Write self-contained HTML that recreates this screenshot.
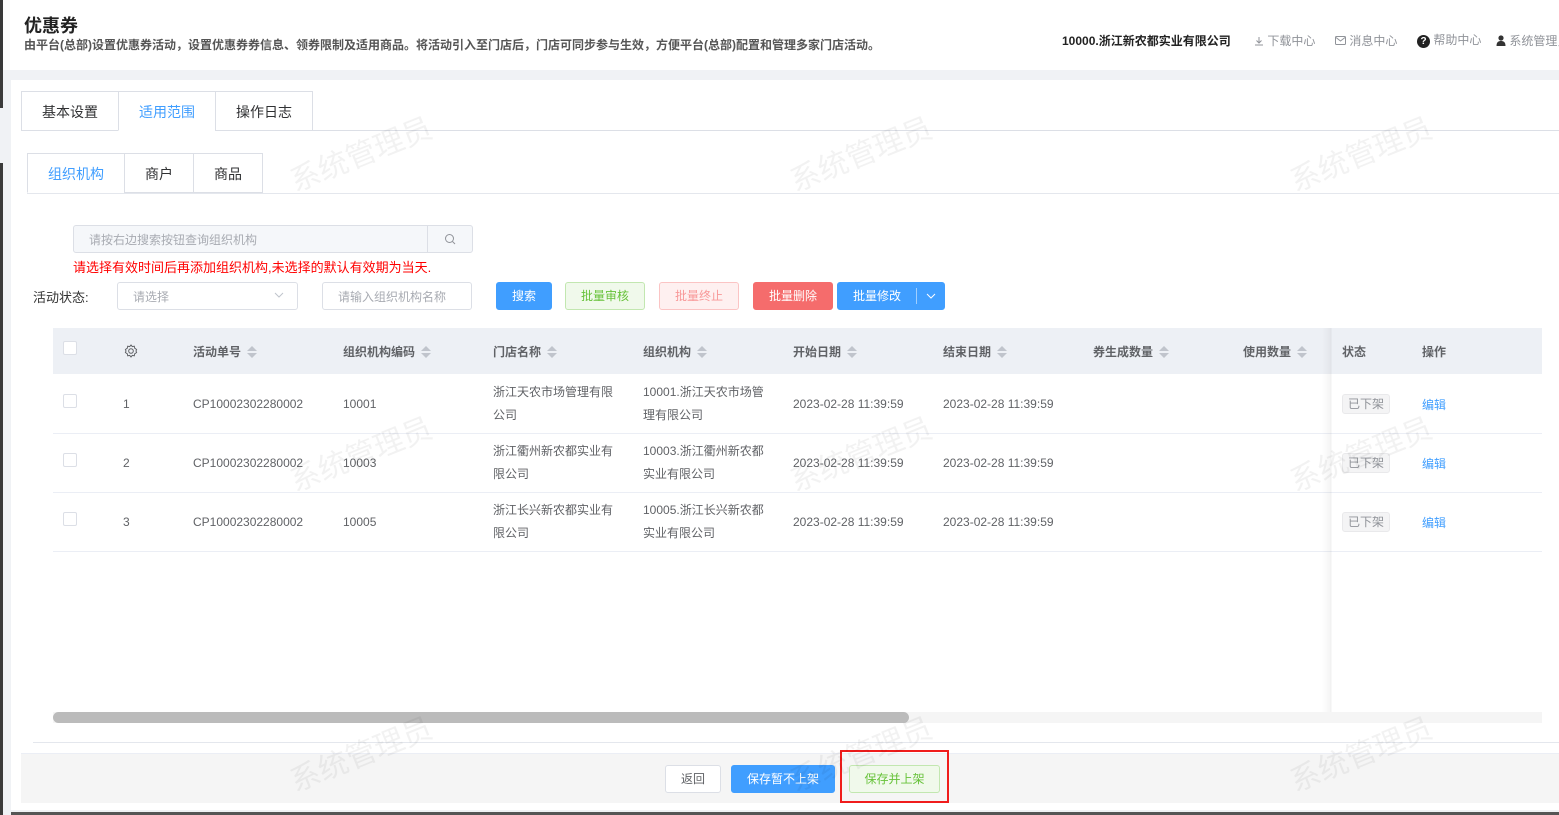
<!DOCTYPE html>
<html><head><meta charset="utf-8"><style>
*{margin:0;padding:0;box-sizing:border-box}
body{width:1559px;height:815px;overflow:hidden;background:#f0f2f5;font-family:"Liberation Sans","Noto Sans CJK SC",sans-serif;color:#333;position:relative;font-size:12px}
.a{position:absolute;white-space:nowrap}
.hdr{left:0;top:0;width:1559px;height:70px;background:#fff}
.card{left:11px;top:80px;width:1548px;height:730px;background:#fff}
.tab{position:absolute;height:40px;border:1px solid #dcdfe6;background:#fff;font-size:14px;text-align:center;line-height:40px;color:#303133}
.btn{position:absolute;height:28px;line-height:26px;text-align:center;border-radius:3px;font-size:12px;border:1px solid}
.th{position:absolute;top:343px;font-weight:bold;color:#606266;font-size:12px}
.sort{display:inline-block;width:10px;height:14px;vertical-align:middle;margin-left:6px;position:relative}
.sort:before{content:"";position:absolute;left:0;top:0;border:5px solid transparent;border-bottom-color:#c0c4cc;border-top:0}
.sort:after{content:"";position:absolute;left:0;top:7px;border:5px solid transparent;border-top-color:#c0c4cc;border-bottom:0}
.td{position:absolute;color:#606266;font-size:12px}
.cb{position:absolute;width:14px;height:14px;border:1px solid #dcdfe6;border-radius:2px;background:#fff}
.tag{position:absolute;left:1342px;width:48px;height:20px;border:1px solid #e9e9eb;background:#f4f4f5;color:#909399;border-radius:3px;text-align:center;line-height:18px;font-size:12px}
.ed{position:absolute;left:1422px;color:#409eff}
.wm{position:absolute;color:rgba(0,0,0,0.05);font-size:30px;transform:rotate(-22deg);white-space:nowrap}
</style></head><body>
<div class="a hdr"></div>
<div class="a" style="left:0;top:0;width:3px;height:108px;background:#3a3a3a"></div>
<div class="a" style="left:24px;top:12px;font-size:18px;font-weight:bold;color:#222">优惠券</div>
<div class="a" style="left:24px;top:36px;font-size:12px;font-weight:bold;color:#555">由平台(总部)设置优惠券活动，设置优惠券券信息、领券限制及适用商品。将活动引入至门店后，门店可同步参与生效，方便平台(总部)配置和管理多家门店活动。</div>
<div class="a" style="left:1062px;top:32px;font-size:12px;font-weight:bold;color:#222">10000.浙江新农都实业有限公司</div>
<div class="a" style="left:1254px;top:32px;color:#909399"><svg width="10" height="10" viewBox="0 0 10 10" style="vertical-align:-1px"><path d="M5 1v6M2.5 4.5L5 7l2.5-2.5M1 9h8" stroke="#909399" fill="none"/></svg> 下载中心</div>
<div class="a" style="left:1335px;top:32px;color:#909399"><svg width="11" height="9" viewBox="0 0 11 9" style="vertical-align:0"><rect x=".5" y=".5" width="10" height="8" rx="1" stroke="#909399" fill="none"/><path d="M1 1.5l4.5 3.5 4.5-3.5" stroke="#909399" fill="none"/></svg> 消息中心</div>
<div class="a" style="left:1417px;top:31px;color:#909399"><span style="display:inline-block;width:13px;height:13px;border-radius:50%;background:#222;color:#fff;font-size:10px;text-align:center;line-height:13px;font-weight:bold">?</span> 帮助中心</div>
<div class="a" style="left:1496px;top:32px;color:#909399"><svg width="10" height="11" viewBox="0 0 10 11" style="vertical-align:-1px"><circle cx="5" cy="3" r="2.6" fill="#333"/><path d="M0.5 11c0-4 2-5 4.5-5s4.5 1 4.5 5z" fill="#333"/></svg> 系统管理员</div>
<div class="a" style="left:0;top:163px;width:3px;height:652px;background:#3a3a3a"></div>
<div class="a card"></div>
<div class="a" style="left:11px;top:812px;width:1548px;height:3px;background:#555"></div>

<div class="a" style="left:21px;top:130px;width:1538px;height:1px;background:#dcdfe6"></div>
<div class="tab" style="left:21px;top:91px;width:98px">基本设置</div>
<div class="tab" style="left:118px;top:91px;width:98px;color:#409eff;border-bottom-color:#fff">适用范围</div>
<div class="tab" style="left:215px;top:91px;width:98px">操作日志</div>

<div class="a" style="left:27px;top:193px;width:1532px;height:1px;background:#e4e7ed"></div>
<div class="tab" style="left:27px;top:153px;width:98px;color:#409eff;border-bottom-color:#fff">组织机构</div>
<div class="tab" style="left:124px;top:153px;width:70px">商户</div>
<div class="tab" style="left:193px;top:153px;width:70px">商品</div>

<div class="a" style="left:73px;top:225px;width:400px;height:28px;border:1px solid #dcdfe6;border-radius:3px;background:#f5f7fa"></div>
<div class="a" style="left:427px;top:225px;width:1px;height:28px;background:#dcdfe6"></div>
<div class="a" style="left:89px;top:231px;color:#a8abb2">请按右边搜索按钮查询组织机构</div>
<svg class="a" style="left:444px;top:233px" width="12" height="12" viewBox="0 0 12 12"><circle cx="5.5" cy="5.5" r="4" stroke="#909399" fill="none"/><path d="M8.5 8.5L11 11" stroke="#909399"/></svg>
<div class="a" style="left:73px;top:257px;color:#f00;font-size:13px">请选择有效时间后再添加组织机构,未选择的默认有效期为当天.</div>

<div class="a" style="left:33px;top:287px;font-size:13px;color:#333">活动状态:</div>
<div class="a" style="left:117px;top:282px;width:181px;height:28px;border:1px solid #dcdfe6;border-radius:3px"></div>
<div class="a" style="left:133px;top:288px;color:#a8abb2">请选择</div>
<svg class="a" style="left:274px;top:292px" width="10" height="6" viewBox="0 0 10 6"><path d="M1 1l4 4 4-4" stroke="#c0c4cc" fill="none"/></svg>
<div class="a" style="left:322px;top:282px;width:150px;height:28px;border:1px solid #dcdfe6;border-radius:3px"></div>
<div class="a" style="left:338px;top:288px;color:#a8abb2">请输入组织机构名称</div>
<div class="btn" style="left:496px;top:282px;width:56px;background:#409eff;border-color:#409eff;color:#fff">搜索</div>
<div class="btn" style="left:565px;top:282px;width:80px;background:#f0f9eb;border-color:#c2e7b0;color:#67c23a">批量审核</div>
<div class="btn" style="left:659px;top:282px;width:80px;background:#fef0f0;border-color:#fbc4c4;color:#f89898">批量终止</div>
<div class="btn" style="left:753px;top:282px;width:80px;background:#f56c6c;border-color:#f56c6c;color:#fff">批量删除</div>
<div class="btn" style="left:837px;top:282px;width:108px;background:#409eff;border-color:#409eff;color:#fff;text-align:left;padding-left:15px">批量修改<span style="position:absolute;left:78px;top:5px;width:1px;height:16px;background:#a0cfff"></span><svg style="position:absolute;left:88px;top:10px" width="10" height="6" viewBox="0 0 10 6"><path d="M1 1l4 4 4-4" stroke="#fff" fill="none"/></svg></div>

<div class="a" style="left:53px;top:328px;width:1489px;height:46px;background:#edf0f5"></div>
<div class="a" style="left:53px;top:433px;width:1489px;height:1px;background:#ebeef5"></div>
<div class="a" style="left:53px;top:492px;width:1489px;height:1px;background:#ebeef5"></div>
<div class="a" style="left:53px;top:551px;width:1489px;height:1px;background:#ebeef5"></div>
<div class="a" style="left:1330px;top:328px;width:2px;height:395px;background:linear-gradient(90deg,rgba(0,0,0,.06),rgba(0,0,0,.02))"></div>
<div class="a" style="left:1322px;top:328px;width:8px;height:395px;background:linear-gradient(90deg,rgba(0,0,0,0),rgba(0,0,0,.04))"></div>

<div class="cb" style="left:63px;top:341px"></div>
<svg class="a" style="left:124px;top:344px" width="14" height="14" viewBox="0 0 14 14"><circle cx="7" cy="7" r="2.3" stroke="#606266" fill="none"/><path d="M7 1l1.3 1.6 2-.4.4 2L12.6 5.5 12 7l.6 1.5-1.9 1.3-.4 2-2-.4L7 13l-1.3-1.6-2 .4-.4-2L1.4 8.5 2 7l-.6-1.5 1.9-1.3.4-2 2 .4z" stroke="#606266" fill="none"/></svg>
<div class="th" style="left:193px">活动单号<span class="sort"></span></div>
<div class="th" style="left:343px">组织机构编码<span class="sort"></span></div>
<div class="th" style="left:493px">门店名称<span class="sort"></span></div>
<div class="th" style="left:643px">组织机构<span class="sort"></span></div>
<div class="th" style="left:793px">开始日期<span class="sort"></span></div>
<div class="th" style="left:943px">结束日期<span class="sort"></span></div>
<div class="th" style="left:1093px">券生成数量<span class="sort"></span></div>
<div class="th" style="left:1243px">使用数量<span class="sort"></span></div>
<div class="th" style="left:1342px">状态</div>
<div class="th" style="left:1422px">操作</div>

<div class="cb" style="left:63px;top:394px"></div>
<div class="td" style="left:123px;top:397px">1</div>
<div class="td" style="left:193px;top:397px">CP10002302280002</div>
<div class="td" style="left:343px;top:397px">10001</div>
<div class="td" style="left:493px;top:381px;line-height:23px">浙江天农市场管理有限<br>公司</div>
<div class="td" style="left:643px;top:381px;line-height:23px">10001.浙江天农市场管<br>理有限公司</div>
<div class="td" style="left:793px;top:397px">2023-02-28 11:39:59</div>
<div class="td" style="left:943px;top:397px">2023-02-28 11:39:59</div>
<div class="tag" style="top:394px">已下架</div><div class="ed" style="top:396px">编辑</div>

<div class="cb" style="left:63px;top:453px"></div>
<div class="td" style="left:123px;top:456px">2</div>
<div class="td" style="left:193px;top:456px">CP10002302280002</div>
<div class="td" style="left:343px;top:456px">10003</div>
<div class="td" style="left:493px;top:440px;line-height:23px">浙江衢州新农都实业有<br>限公司</div>
<div class="td" style="left:643px;top:440px;line-height:23px">10003.浙江衢州新农都<br>实业有限公司</div>
<div class="td" style="left:793px;top:456px">2023-02-28 11:39:59</div>
<div class="td" style="left:943px;top:456px">2023-02-28 11:39:59</div>
<div class="tag" style="top:453px">已下架</div><div class="ed" style="top:455px">编辑</div>

<div class="cb" style="left:63px;top:512px"></div>
<div class="td" style="left:123px;top:515px">3</div>
<div class="td" style="left:193px;top:515px">CP10002302280002</div>
<div class="td" style="left:343px;top:515px">10005</div>
<div class="td" style="left:493px;top:499px;line-height:23px">浙江长兴新农都实业有<br>限公司</div>
<div class="td" style="left:643px;top:499px;line-height:23px">10005.浙江长兴新农都<br>实业有限公司</div>
<div class="td" style="left:793px;top:515px">2023-02-28 11:39:59</div>
<div class="td" style="left:943px;top:515px">2023-02-28 11:39:59</div>
<div class="tag" style="top:512px">已下架</div><div class="ed" style="top:514px">编辑</div>

<div class="a" style="left:53px;top:712px;width:1489px;height:11px;background:#f5f5f5"></div>
<div class="a" style="left:53px;top:712px;width:856px;height:11px;background:#bbb;border-radius:6px"></div>
<div class="a" style="left:33px;top:742px;width:1526px;height:1px;background:#e4e7ed"></div>

<div class="a" style="left:21px;top:753px;width:1538px;height:50px;background:#f5f5f5;border-top:1px solid #ebeef5"></div>
<div class="btn" style="left:665px;top:765px;width:56px;background:#fff;border-color:#dcdfe6;color:#606266">返回</div>
<div class="btn" style="left:731px;top:765px;width:104px;background:#409eff;border-color:#409eff;color:#fff">保存暂不上架</div>
<div class="btn" style="left:849px;top:765px;width:91px;background:#f0f9eb;border-color:#c2e7b0;color:#67c23a">保存并上架</div>
<div class="a" style="left:840px;top:750px;width:109px;height:53px;border:2px solid #f01c1c"></div>

<div class="wm" style="left:285px;top:130px">系统管理员</div>
<div class="wm" style="left:785px;top:130px">系统管理员</div>
<div class="wm" style="left:1285px;top:130px">系统管理员</div>
<div class="wm" style="left:285px;top:430px">系统管理员</div>
<div class="wm" style="left:785px;top:430px">系统管理员</div>
<div class="wm" style="left:1285px;top:430px">系统管理员</div>
<div class="wm" style="left:285px;top:730px">系统管理员</div>
<div class="wm" style="left:785px;top:730px">系统管理员</div>
<div class="wm" style="left:1285px;top:730px">系统管理员</div>
</body></html>
